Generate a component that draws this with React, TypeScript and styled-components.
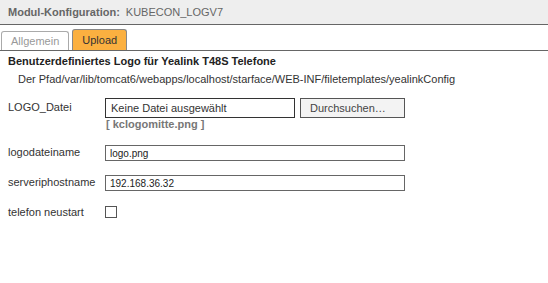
import React from "react";
import styled, { createGlobalStyle } from "styled-components";

const GlobalStyle = createGlobalStyle`
  body {
    margin: 0;
    background: #fff;
    font-family: "Liberation Sans", Arial, sans-serif;
    font-size: 11px;
    color: #333;
  }
`;

const Header = styled.div`
  height: 24px;
  background: #eeeeee;
  border-bottom: 1px solid #666;
  display: flex;
  align-items: center;
  padding-left: 8px;
  gap: 6px;
  color: #666;
`;

const HeaderLabel = styled.span`
  font-weight: bold;
`;

const TabBar = styled.div`
  display: flex;
  align-items: flex-end;
  gap: 3px;
  height: 25px;
  padding-left: 1px;
  border-bottom: 1px solid #666;
`;

const Tab = styled.div<{ $active?: boolean }>`
  height: ${(p) => (p.$active ? 20 : 18)}px;
  padding: 0 ${(p) => (p.$active ? 9 : 9)}px;
  display: flex;
  align-items: center;
  border: 1px solid ${(p) => (p.$active ? "#888" : "#aaa")};
  border-bottom: none;
  border-radius: 3px 3px 0 0;
  background: ${(p) => (p.$active ? "#fbb040" : "#fff")};
  color: ${(p) => (p.$active ? "#333" : "#999")};
`;

const Content = styled.div`
  padding: 4px 8px;
`;

const Title = styled.div`
  font-weight: bold;
  color: #222;
  line-height: 13px;
`;

const PathText = styled.div`
  padding-left: 10px;
  margin-top: 5px;
  line-height: 13px;
`;

const Form = styled.div`
  display: grid;
  grid-template-columns: 97px auto;
  row-gap: 14px;
  margin-top: 12px;
  align-items: start;
`;

const Label = styled.div<{ $top: number }>`
  padding-top: ${(p) => p.$top}px;
  line-height: 13px;
`;

const FileRow = styled.div`
  display: flex;
  gap: 5px;
`;

const FileBox = styled.div`
  width: 190px;
  height: 20px;
  box-sizing: border-box;
  border: 1px solid #333;
  padding-left: 5px;
  display: flex;
  align-items: center;
  font-size: 11px;
`;

const BrowseButton = styled.div`
  width: 105px;
  height: 20px;
  box-sizing: border-box;
  border: 1px solid #555;
  background: #f3f3f3;
  padding-left: 9px;
  display: flex;
  align-items: center;
  color: #444;
`;

const FileName = styled.div`
  font-weight: bold;
  color: #777;
  padding-left: 1px;
  margin-bottom: 1px;
  line-height: 12px;
`;

const TextInput = styled.div`
  width: 300px;
  height: 16px;
  box-sizing: border-box;
  border: 1px solid #666;
  padding-left: 4px;
  display: flex;
  align-items: center;
  font-size: 10px;
  color: #222;
`;

const Checkbox = styled.div`
  width: 12px;
  height: 12px;
  box-sizing: border-box;
  border: 1px solid #555;
  margin-top: 1px;
`;

export default function App() {
  return (
    <>
      <GlobalStyle />
      <Header>
        <HeaderLabel>Modul-Konfiguration:</HeaderLabel>
        <span>KUBECON_LOGV7</span>
      </Header>
      <TabBar>
        <Tab>Allgemein</Tab>
        <Tab $active>Upload</Tab>
      </TabBar>
      <Content>
        <Title>Benutzerdefiniertes Logo für Yealink T48S Telefone</Title>
        <PathText>
          Der Pfad/var/lib/tomcat6/webapps/localhost/starface/WEB-INF/filetemplates/yealinkConfig
        </PathText>
        <Form>
          <Label $top={3}>LOGO_Datei</Label>
          <div>
            <FileRow>
              <FileBox>Keine Datei ausgewählt</FileBox>
              <BrowseButton>Durchsuchen…</BrowseButton>
            </FileRow>
            <FileName>[ kclogomitte.png ]</FileName>
          </div>
          <Label $top={1}>logodateiname</Label>
          <TextInput>logo.png</TextInput>
          <Label $top={1}>serveriphostname</Label>
          <TextInput>192.168.36.32</TextInput>
          <Label $top={1}>telefon neustart</Label>
          <Checkbox />
        </Form>
      </Content>
    </>
  );
}
